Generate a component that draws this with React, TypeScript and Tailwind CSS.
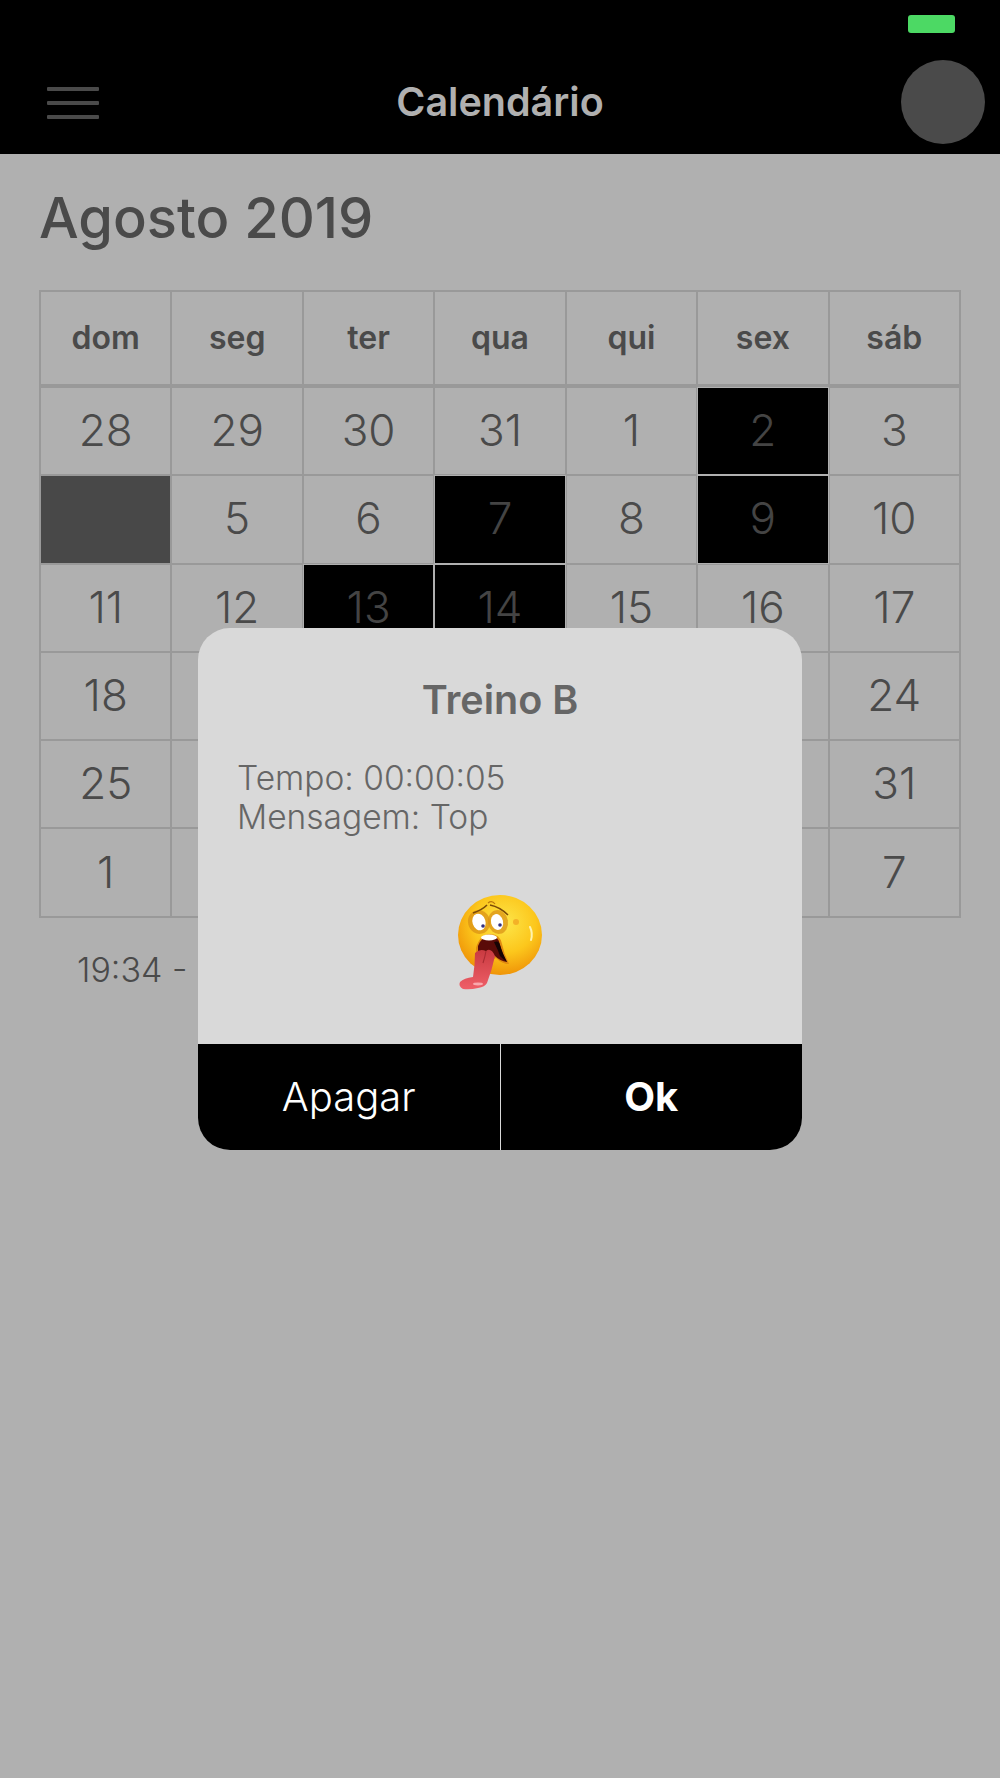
import React from "react";

const days = ["dom", "seg", "ter", "qua", "qui", "sex", "sáb"];
const rows: (string | number)[][] = [
  [28, 29, 30, 31, 1, 2, 3],
  ["", 5, 6, 7, 8, 9, 10],
  [11, 12, 13, 14, 15, 16, 17],
  [18, 19, 20, 21, 22, 23, 24],
  [25, 26, 27, 28, 29, 30, 31],
  [1, 2, 3, 4, 5, 6, 7],
];
const blackCells = ["0-5", "1-3", "1-5", "2-2", "2-3"];

function Emoji() {
  return (
    <svg width="120" height="120" viewBox="0 0 120 120" className="block">
      <defs>
        <radialGradient id="face" cx="0.55" cy="0.35" r="0.68">
          <stop offset="0" stopColor="#fde64a" />
          <stop offset="0.55" stopColor="#fcc71c" />
          <stop offset="1" stopColor="#ee8f06" />
        </radialGradient>
        <linearGradient id="tongue" x1="0" y1="0" x2="0" y2="1">
          <stop offset="0" stopColor="#c93a40" />
          <stop offset="1" stopColor="#ef5f68" />
        </linearGradient>
      </defs>
      <ellipse cx="60" cy="55" rx="42" ry="40" fill="url(#face)" />
      <ellipse cx="39" cy="42" rx="11" ry="12" fill="#d98f14" opacity="0.7" transform="rotate(-15 39 42)" />
      <ellipse cx="58" cy="42" rx="10" ry="12" fill="#d98f14" opacity="0.7" transform="rotate(-10 58 42)" />
      <ellipse cx="39" cy="42" rx="6.5" ry="8.5" fill="#fff" transform="rotate(-18 39 42)" />
      <ellipse cx="57" cy="42" rx="6" ry="8" fill="#fff" transform="rotate(-14 57 42)" />
      <circle cx="43" cy="46" r="1.8" fill="#33307f" />
      <circle cx="60" cy="45" r="1.8" fill="#33307f" />
      <path d="M33 33 Q42 30 47 25" stroke="#7a4a08" strokeWidth="1.6" fill="none" />
      <path d="M50 25 Q60 27 68 35" stroke="#7a4a08" strokeWidth="1.6" fill="none" />
      <path d="M48 23 Q52 20 55 24" stroke="#b9760c" strokeWidth="1.2" fill="none" />
      <path d="M36 68 Q40 54 50 54 Q60 54 62 64 Q64 74 69 84 Q62 84 56 78 L48 82 L36 84 Z" fill="#e08a10" />
      <path d="M38 66 Q42 56 50 56 Q59 56 60 65 Q62 74 67 82 Q60 81 55 76 L45 76 L38 74 Z" fill="#5a0b08" />
      <path d="M54 62 Q58 70 60 76 Q64 80 67 82 Q62 72 60 65 Q59 60 54 62Z" fill="#160404" />
      <ellipse cx="49" cy="57.5" rx="8" ry="3" fill="#fff" />
      <path d="M35 73 Q40 68 46 71 Q51 67 55 76 Q52 90 47 103 Q45 107 38 108 Q30 110 23 109 Q18 106 20 102 Q24 98 33 97 Q35 85 35 73Z" fill="url(#tongue)" />
      <path d="M46 71 Q45 77 43 83" stroke="#a82c33" strokeWidth="1.1" fill="none" />
      <ellipse cx="38" cy="104" rx="5" ry="1.4" fill="#f9a8ad" />
      <path d="M90 47 Q93 53 91 60" stroke="#fff3b0" strokeWidth="2" fill="none" strokeLinecap="round" />
      <circle cx="76" cy="42" r="3" fill="#f0a020" opacity="0.7" />
    </svg>
  );
}

export default function App() {
  return (
    <div className="relative h-[1778px] w-full overflow-hidden bg-[#b0b0b0] font-['Inter','Liberation_Sans',sans-serif] text-[#4a4a4a]">
      <header className="relative flex h-[154px] items-end justify-between bg-black pb-[10px] pl-[47px] pr-[15px]">
        <div className="mb-[25px] flex w-[52px] flex-col gap-[9.5px]">
          <div className="h-[4.5px] rounded-[1px] bg-[#4a4a4a]" />
          <div className="h-[4.5px] rounded-[1px] bg-[#4a4a4a]" />
          <div className="h-[4.5px] rounded-[1px] bg-[#4a4a4a]" />
        </div>
        <h1 className="mb-[20px] text-[39.5px] font-semibold leading-[44px] text-[#b0b0b0]">Calendário</h1>
        <div className="h-[84px] w-[84px] rounded-full bg-[#4a4a4a]" />
        <div className="absolute left-[908px] top-[15px] h-[18px] w-[47px] rounded-[3px] bg-[#4cd964]" />
      </header>

      <main className="px-[39px] pt-[29px]">
        <h2 className="text-[56px] font-medium leading-[70px]">Agosto 2019</h2>

        <div className="mt-[37px] w-[922px] border border-[#999]">
          <div className="grid grid-cols-7 border-b-[2px] border-[#999]">
            {days.map((d) => (
              <div
                key={d}
                className="flex h-[94px] items-center justify-center border border-[#999] text-[32px] font-semibold"
              >
                {d}
              </div>
            ))}
          </div>
          {rows.map((row, r) => (
            <div key={r} className="grid grid-cols-7">
              {row.map((c, i) => {
                const black = blackCells.includes(`${r}-${i}`);
                const dark = r === 1 && i === 0;
                return (
                  <div
                    key={i}
                    className={`flex h-[88.3px] items-center justify-center border pb-[2px] text-[44px] font-light ${
                      black
                        ? "border-[#b0b0b0] bg-black text-[#444]"
                        : dark
                          ? "border-[#999] bg-[#484848]"
                          : "border-[#999]"
                    }`}
                  >
                    {c}
                  </div>
                );
              })}
            </div>
          ))}
        </div>

        <p className="mt-[31px] pl-[38px] text-[34px] font-light leading-[42px]">19:34 - Treino B</p>
      </main>

      <div className="absolute left-[198px] top-[628px] flex h-[522px] w-[604px] flex-col overflow-hidden rounded-[32px] bg-[#d9d9d9]">
        <div className="relative flex-1 px-[39px] pt-[49px] text-[#666]">
          <h3 className="text-center text-[39.5px] font-semibold leading-[46px]">Treino B</h3>
          <div className="mt-[36px] text-[33.5px] font-light leading-[39px]">
            <p>Tempo: 00:00:05</p>
            <p>Mensagem: Top</p>
          </div>
          <div className="absolute left-[242px] top-[252px]">
            <Emoji />
          </div>
        </div>
        <div className="flex h-[106px] bg-black text-[40px] leading-none text-white">
          <button className="flex-1 border-r border-[#d9d9d9] font-light">Apagar</button>
          <button className="flex-1 font-bold">Ok</button>
        </div>
      </div>
    </div>
  );
}
